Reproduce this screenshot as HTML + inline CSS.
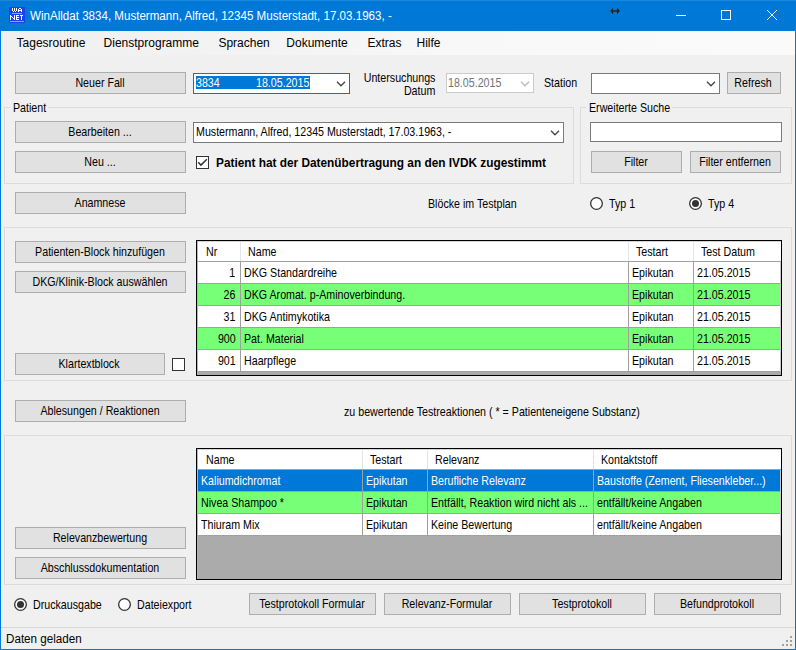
<!DOCTYPE html><html><head><meta charset="utf-8"><style>
html,body{margin:0;padding:0;}
body{width:796px;height:650px;position:relative;overflow:hidden;background:#F0F0F0;font-family:"Liberation Sans",sans-serif;}
.r{position:absolute;box-sizing:border-box;}
.t{position:absolute;white-space:nowrap;font-family:"Liberation Sans",sans-serif;}
</style></head><body>
<div class="r" style="left:0px;top:0px;width:796px;height:31px;background:#0078D7;"></div>
<div class="r" style="left:0px;top:0px;width:796px;height:1px;background:#1C86DA;"></div>
<svg class="r" style="left:9px;top:7px" width="16" height="16" viewBox="0 0 16 16" shape-rendering="crispEdges"><rect width="16" height="16" fill="#1A44E4"/><rect x="3" y="1" width="1" height="3" fill="#FFF"/><rect x="5" y="1" width="1" height="3" fill="#FFF"/><rect x="7" y="1" width="1" height="3" fill="#FFF"/><rect x="4" y="4" width="1" height="1" fill="#FFF"/><rect x="6" y="4" width="1" height="1" fill="#FFF"/><rect x="10" y="1" width="2" height="1" fill="#FFF"/><rect x="9" y="2" width="1" height="3" fill="#FFF"/><rect x="12" y="2" width="1" height="3" fill="#FFF"/><rect x="10" y="3" width="2" height="1" fill="#FFF"/><rect x="3" y="6" width="10" height="1" fill="#F59A1E"/><rect x="1" y="8" width="1" height="5" fill="#FFF"/><rect x="5" y="8" width="1" height="5" fill="#FFF"/><rect x="2" y="9" width="1" height="1" fill="#FFF"/><rect x="3" y="10" width="1" height="1" fill="#FFF"/><rect x="4" y="11" width="1" height="1" fill="#FFF"/><rect x="7" y="8" width="1" height="5" fill="#FFF"/><rect x="8" y="8" width="2" height="1" fill="#FFF"/><rect x="8" y="10" width="2" height="1" fill="#FFF"/><rect x="8" y="12" width="2" height="1" fill="#FFF"/><rect x="11" y="8" width="3" height="1" fill="#FFF"/><rect x="12" y="9" width="1" height="4" fill="#FFF"/><rect x="1" y="14" width="14" height="1" fill="#F59A1E"/></svg>
<div class="t" style="left:30.3px;top:9px;font-size:12px;line-height:14px;color:#FFF;transform:scaleX(0.965);transform-origin:0 0;">WinAlldat 3834, Mustermann, Alfred, 12345 Musterstadt, 17.03.1963, -</div>
<svg class="r" style="left:610px;top:7px" width="11" height="8" viewBox="0 0 11 8"><path d="M0 4 L3 0.8 L3.2 3.2 L6.8 3.2 L7 0.8 L10 4 L7 7.2 L6.8 4.8 L3.2 4.8 L3 7.2 Z" fill="#2B2420"/></svg>
<div class="r" style="left:676px;top:15px;width:10px;height:1px;background:#FFF;"></div>
<div class="r" style="left:721px;top:10px;width:10px;height:10px;border:1px solid #FFF;"></div>
<svg class="r" style="left:767px;top:10px" width="10" height="10" viewBox="0 0 10 10"><path d="M0 0 L10 10 M10 0 L0 10" fill="none" stroke="#FFF" stroke-width="1"/></svg>
<div class="r" style="left:0px;top:31px;width:1px;height:619px;background:#0078D7;"></div>
<div class="r" style="left:795px;top:31px;width:1px;height:619px;background:#0078D7;"></div>
<div class="r" style="left:0px;top:649px;width:796px;height:1px;background:#0078D7;"></div>
<div class="r" style="left:1px;top:31px;width:794px;height:24px;background:linear-gradient(90deg,#F0F0F0 0px,#F3F3F3 250px,#F8F8F8 450px,#FAFAFA 796px);"></div>
<div class="t" style="left:16.6px;top:36px;font-size:12px;line-height:14px;color:#000;transform:scaleX(1);transform-origin:0 0;">Tagesroutine</div>
<div class="t" style="left:103.6px;top:36px;font-size:12px;line-height:14px;color:#000;transform:scaleX(1);transform-origin:0 0;">Dienstprogramme</div>
<div class="t" style="left:218.4px;top:36px;font-size:12px;line-height:14px;color:#000;transform:scaleX(1);transform-origin:0 0;">Sprachen</div>
<div class="t" style="left:286.3px;top:36px;font-size:12px;line-height:14px;color:#000;transform:scaleX(1);transform-origin:0 0;">Dokumente</div>
<div class="t" style="left:367.4px;top:36px;font-size:12px;line-height:14px;color:#000;transform:scaleX(1);transform-origin:0 0;">Extras</div>
<div class="t" style="left:416.5px;top:36px;font-size:12px;line-height:14px;color:#000;transform:scaleX(1);transform-origin:0 0;">Hilfe</div>
<div class="r" style="left:15px;top:72px;width:171px;height:22px;background:#E1E1E1;border:1px solid #ADADAD;"></div>
<div class="t" style="left:-200.5px;width:600px;text-align:center;top:75px;font-size:13px;line-height:15px;color:#000;transform:scaleX(0.82);transform-origin:50% 0;">Neuer Fall</div>
<div class="r" style="left:193px;top:73px;width:157px;height:21px;background:#FFF;border:1px solid #0078D7;"></div>
<div class="r" style="left:196px;top:76px;width:114px;height:13px;background:#0078D7;"></div>
<div class="t" style="left:196px;top:75px;font-size:13px;line-height:15px;color:#FFF;transform:scaleX(0.82);transform-origin:0 0;">3834</div>
<div class="t" style="left:256px;top:75px;font-size:13px;line-height:15px;color:#FFF;transform:scaleX(0.82);transform-origin:0 0;">18.05.2015</div>
<svg class="r" style="left:336px;top:81px" width="10" height="6" viewBox="0 0 10 6"><path d="M1 0.8 L5 4.8 L9 0.8" fill="none" stroke="#444" stroke-width="1.3"/></svg>
<div class="t" style="right:360.5px;top:70px;font-size:13px;line-height:15px;color:#000;transform:scaleX(0.82);transform-origin:100% 0;">Untersuchungs</div>
<div class="t" style="right:360.5px;top:83px;font-size:13px;line-height:15px;color:#000;transform:scaleX(0.82);transform-origin:100% 0;">Datum</div>
<div class="r" style="left:446px;top:73px;width:88px;height:20px;background:#FFF;border:1px solid #CCCCCC;"></div>
<div class="t" style="left:448.1px;top:75px;font-size:13px;line-height:15px;color:#737373;transform:scaleX(0.82);transform-origin:0 0;">18.05.2015</div>
<svg class="r" style="left:520px;top:81px" width="10" height="6" viewBox="0 0 10 6"><path d="M1 0.8 L5 4.8 L9 0.8" fill="none" stroke="#BBBBBB" stroke-width="1.3"/></svg>
<div class="t" style="left:543.5px;top:75px;font-size:13px;line-height:15px;color:#000;transform:scaleX(0.82);transform-origin:0 0;">Station</div>
<div class="r" style="left:591px;top:73px;width:129px;height:21px;background:#FFF;border:1px solid #7A7A7A;"></div>
<svg class="r" style="left:706px;top:81.0px" width="10" height="6" viewBox="0 0 10 6"><path d="M1 0.8 L5 4.8 L9 0.8" fill="none" stroke="#444" stroke-width="1.3"/></svg>
<div class="r" style="left:727px;top:72px;width:54px;height:22px;background:#E1E1E1;border:1px solid #ADADAD;"></div>
<div class="t" style="left:453.0px;width:600px;text-align:center;top:75px;font-size:13px;line-height:15px;color:#000;transform:scaleX(0.82);transform-origin:50% 0;">Refresh</div>
<div class="r" style="left:4px;top:107px;width:570px;height:77px;border:1px solid #DCDCDC;"></div>
<div class="r" style="left:10px;top:106px;width:38px;height:3px;background:#F0F0F0;"></div>
<div class="t" style="left:13px;top:100px;font-size:13px;line-height:15px;color:#000;transform:scaleX(0.82);transform-origin:0 0;">Patient</div>
<div class="r" style="left:15px;top:121px;width:171px;height:22px;background:#E1E1E1;border:1px solid #ADADAD;"></div>
<div class="t" style="left:-200.5px;width:600px;text-align:center;top:124px;font-size:13px;line-height:15px;color:#000;transform:scaleX(0.82);transform-origin:50% 0;">Bearbeiten ...</div>
<div class="r" style="left:193px;top:122px;width:371px;height:21px;background:#FFF;border:1px solid #7A7A7A;"></div>
<svg class="r" style="left:550px;top:130.0px" width="10" height="6" viewBox="0 0 10 6"><path d="M1 0.8 L5 4.8 L9 0.8" fill="none" stroke="#444" stroke-width="1.3"/></svg>
<div class="t" style="left:196px;top:124px;font-size:13px;line-height:15px;color:#000;transform:scaleX(0.82);transform-origin:0 0;">Mustermann, Alfred, 12345 Musterstadt, 17.03.1963, -</div>
<div class="r" style="left:15px;top:151px;width:171px;height:22px;background:#E1E1E1;border:1px solid #ADADAD;"></div>
<div class="t" style="left:-200.5px;width:600px;text-align:center;top:154px;font-size:13px;line-height:15px;color:#000;transform:scaleX(0.82);transform-origin:50% 0;">Neu ...</div>
<div class="r" style="left:196px;top:156px;width:13px;height:13px;background:#FFF;border:1px solid #333;"></div>
<svg class="r" style="left:196px;top:156px" width="13" height="13" viewBox="0 0 13 13"><path d="M2.2 6.3 L4.9 9.1 L10.9 3.2" fill="none" stroke="#333" stroke-width="1.5"/></svg>
<div class="t" style="left:216px;top:156px;font-size:12px;line-height:14px;color:#000;font-weight:bold;transform:scaleX(0.986);transform-origin:0 0;">Patient hat der Datenübertragung an den IVDK zugestimmt</div>
<div class="r" style="left:580px;top:107px;width:212px;height:77px;border:1px solid #DCDCDC;"></div>
<div class="r" style="left:586px;top:106px;width:86px;height:3px;background:#F0F0F0;"></div>
<div class="t" style="left:589px;top:100px;font-size:13px;line-height:15px;color:#000;transform:scaleX(0.82);transform-origin:0 0;">Erweiterte Suche</div>
<div class="r" style="left:590px;top:122px;width:192px;height:20px;background:#FFF;border:1px solid #7A7A7A;"></div>
<div class="r" style="left:591px;top:151px;width:91px;height:22px;background:#E1E1E1;border:1px solid #ADADAD;"></div>
<div class="t" style="left:335.5px;width:600px;text-align:center;top:154px;font-size:13px;line-height:15px;color:#000;transform:scaleX(0.82);transform-origin:50% 0;">Filter</div>
<div class="r" style="left:690px;top:151px;width:91px;height:22px;background:#E1E1E1;border:1px solid #ADADAD;"></div>
<div class="t" style="left:434.5px;width:600px;text-align:center;top:154px;font-size:13px;line-height:15px;color:#000;transform:scaleX(0.82);transform-origin:50% 0;">Filter entfernen</div>
<div class="r" style="left:15px;top:192px;width:171px;height:22px;background:#E1E1E1;border:1px solid #ADADAD;"></div>
<div class="t" style="left:-200.5px;width:600px;text-align:center;top:195px;font-size:13px;line-height:15px;color:#000;transform:scaleX(0.82);transform-origin:50% 0;">Anamnese</div>
<div class="t" style="left:427.7px;top:196px;font-size:13px;line-height:15px;color:#000;transform:scaleX(0.82);transform-origin:0 0;">Blöcke im Testplan</div>
<svg class="r" style="left:590px;top:197px" width="13" height="13" viewBox="0 0 13 13"><circle cx="6.5" cy="6.5" r="5.85" fill="#FFF" stroke="#333" stroke-width="1.3"/></svg>
<div class="t" style="left:609px;top:196px;font-size:13px;line-height:15px;color:#000;transform:scaleX(0.82);transform-origin:0 0;">Typ 1</div>
<svg class="r" style="left:689px;top:197px" width="13" height="13" viewBox="0 0 13 13"><circle cx="6.5" cy="6.5" r="5.85" fill="#FFF" stroke="#333" stroke-width="1.3"/><circle cx="6.5" cy="6.5" r="3.5" fill="#333"/></svg>
<div class="t" style="left:707.6px;top:196px;font-size:13px;line-height:15px;color:#000;transform:scaleX(0.82);transform-origin:0 0;">Typ 4</div>
<div class="r" style="left:4px;top:227px;width:788px;height:154px;border:1px solid #DCDCDC;"></div>
<div class="r" style="left:15px;top:241px;width:171px;height:22px;background:#E1E1E1;border:1px solid #ADADAD;"></div>
<div class="t" style="left:-200.5px;width:600px;text-align:center;top:244px;font-size:13px;line-height:15px;color:#000;transform:scaleX(0.82);transform-origin:50% 0;">Patienten-Block hinzufügen</div>
<div class="r" style="left:15px;top:271px;width:171px;height:22px;background:#E1E1E1;border:1px solid #ADADAD;"></div>
<div class="t" style="left:-200.5px;width:600px;text-align:center;top:274px;font-size:13px;line-height:15px;color:#000;transform:scaleX(0.82);transform-origin:50% 0;">DKG/Klinik-Block auswählen</div>
<div class="r" style="left:15px;top:353px;width:150px;height:22px;background:#E1E1E1;border:1px solid #ADADAD;"></div>
<div class="t" style="left:-211.0px;width:600px;text-align:center;top:356px;font-size:13px;line-height:15px;color:#000;transform:scaleX(0.82);transform-origin:50% 0;">Klartextblock</div>
<div class="r" style="left:172px;top:358px;width:13px;height:13px;background:#FFF;border:1px solid #333;"></div>
<div class="r" style="left:196px;top:240px;width:586px;height:136px;background:#ABABAB;border:1px solid #000;"></div>
<div class="r" style="left:197px;top:241px;width:584px;height:20px;background:#FFF;"></div>
<div class="r" style="left:197px;top:261px;width:584px;height:1px;background:#A0A0A0;"></div>
<div class="r" style="left:240px;top:241px;width:1px;height:20px;background:#E5E5E5;"></div>
<div class="r" style="left:628px;top:241px;width:1px;height:20px;background:#E5E5E5;"></div>
<div class="r" style="left:693px;top:241px;width:1px;height:20px;background:#E5E5E5;"></div>
<div class="t" style="left:206.3px;top:244px;font-size:13px;line-height:15px;color:#000;transform:scaleX(0.82);transform-origin:0 0;">Nr</div>
<div class="t" style="left:248px;top:244px;font-size:13px;line-height:15px;color:#000;transform:scaleX(0.82);transform-origin:0 0;">Name</div>
<div class="t" style="left:636px;top:244px;font-size:13px;line-height:15px;color:#000;transform:scaleX(0.82);transform-origin:0 0;">Testart</div>
<div class="t" style="left:701px;top:244px;font-size:13px;line-height:15px;color:#000;transform:scaleX(0.82);transform-origin:0 0;">Test Datum</div>
<div class="r" style="left:197px;top:262px;width:584px;height:21px;background:#FFF;"></div>
<div class="r" style="left:197px;top:283px;width:584px;height:1px;background:#A0A0A0;"></div>
<div class="r" style="left:240px;top:262px;width:1px;height:21px;background:#A0A0A0;"></div>
<div class="r" style="left:628px;top:262px;width:1px;height:21px;background:#A0A0A0;"></div>
<div class="r" style="left:693px;top:262px;width:1px;height:21px;background:#A0A0A0;"></div>
<div class="t" style="right:560.5px;top:265px;font-size:13px;line-height:15px;color:#000;transform:scaleX(0.82);transform-origin:100% 0;">1</div>
<div class="t" style="left:243.8px;top:265px;font-size:13px;line-height:15px;color:#000;transform:scaleX(0.82);transform-origin:0 0;">DKG Standardreihe</div>
<div class="t" style="left:631.8px;top:265px;font-size:13px;line-height:15px;color:#000;transform:scaleX(0.82);transform-origin:0 0;">Epikutan</div>
<div class="t" style="left:696.8px;top:265px;font-size:13px;line-height:15px;color:#000;transform:scaleX(0.82);transform-origin:0 0;">21.05.2015</div>
<div class="r" style="left:197px;top:284px;width:584px;height:21px;background:#78FF78;"></div>
<div class="r" style="left:197px;top:305px;width:584px;height:1px;background:#A0A0A0;"></div>
<div class="r" style="left:240px;top:284px;width:1px;height:21px;background:#A0A0A0;"></div>
<div class="r" style="left:628px;top:284px;width:1px;height:21px;background:#A0A0A0;"></div>
<div class="r" style="left:693px;top:284px;width:1px;height:21px;background:#A0A0A0;"></div>
<div class="t" style="right:560.5px;top:287px;font-size:13px;line-height:15px;color:#000;transform:scaleX(0.82);transform-origin:100% 0;">26</div>
<div class="t" style="left:243.8px;top:287px;font-size:13px;line-height:15px;color:#000;transform:scaleX(0.82);transform-origin:0 0;">DKG Aromat. p-Aminoverbindung.</div>
<div class="t" style="left:631.8px;top:287px;font-size:13px;line-height:15px;color:#000;transform:scaleX(0.82);transform-origin:0 0;">Epikutan</div>
<div class="t" style="left:696.8px;top:287px;font-size:13px;line-height:15px;color:#000;transform:scaleX(0.82);transform-origin:0 0;">21.05.2015</div>
<div class="r" style="left:197px;top:306px;width:584px;height:21px;background:#FFF;"></div>
<div class="r" style="left:197px;top:327px;width:584px;height:1px;background:#A0A0A0;"></div>
<div class="r" style="left:240px;top:306px;width:1px;height:21px;background:#A0A0A0;"></div>
<div class="r" style="left:628px;top:306px;width:1px;height:21px;background:#A0A0A0;"></div>
<div class="r" style="left:693px;top:306px;width:1px;height:21px;background:#A0A0A0;"></div>
<div class="t" style="right:560.5px;top:309px;font-size:13px;line-height:15px;color:#000;transform:scaleX(0.82);transform-origin:100% 0;">31</div>
<div class="t" style="left:243.8px;top:309px;font-size:13px;line-height:15px;color:#000;transform:scaleX(0.82);transform-origin:0 0;">DKG Antimykotika</div>
<div class="t" style="left:631.8px;top:309px;font-size:13px;line-height:15px;color:#000;transform:scaleX(0.82);transform-origin:0 0;">Epikutan</div>
<div class="t" style="left:696.8px;top:309px;font-size:13px;line-height:15px;color:#000;transform:scaleX(0.82);transform-origin:0 0;">21.05.2015</div>
<div class="r" style="left:197px;top:328px;width:584px;height:21px;background:#78FF78;"></div>
<div class="r" style="left:197px;top:349px;width:584px;height:1px;background:#A0A0A0;"></div>
<div class="r" style="left:240px;top:328px;width:1px;height:21px;background:#A0A0A0;"></div>
<div class="r" style="left:628px;top:328px;width:1px;height:21px;background:#A0A0A0;"></div>
<div class="r" style="left:693px;top:328px;width:1px;height:21px;background:#A0A0A0;"></div>
<div class="t" style="right:560.5px;top:331px;font-size:13px;line-height:15px;color:#000;transform:scaleX(0.82);transform-origin:100% 0;">900</div>
<div class="t" style="left:243.8px;top:331px;font-size:13px;line-height:15px;color:#000;transform:scaleX(0.82);transform-origin:0 0;">Pat. Material</div>
<div class="t" style="left:631.8px;top:331px;font-size:13px;line-height:15px;color:#000;transform:scaleX(0.82);transform-origin:0 0;">Epikutan</div>
<div class="t" style="left:696.8px;top:331px;font-size:13px;line-height:15px;color:#000;transform:scaleX(0.82);transform-origin:0 0;">21.05.2015</div>
<div class="r" style="left:197px;top:350px;width:584px;height:21px;background:#FFF;"></div>
<div class="r" style="left:197px;top:371px;width:584px;height:1px;background:#A0A0A0;"></div>
<div class="r" style="left:240px;top:350px;width:1px;height:21px;background:#A0A0A0;"></div>
<div class="r" style="left:628px;top:350px;width:1px;height:21px;background:#A0A0A0;"></div>
<div class="r" style="left:693px;top:350px;width:1px;height:21px;background:#A0A0A0;"></div>
<div class="t" style="right:560.5px;top:353px;font-size:13px;line-height:15px;color:#000;transform:scaleX(0.82);transform-origin:100% 0;">901</div>
<div class="t" style="left:243.8px;top:353px;font-size:13px;line-height:15px;color:#000;transform:scaleX(0.82);transform-origin:0 0;">Haarpflege</div>
<div class="t" style="left:631.8px;top:353px;font-size:13px;line-height:15px;color:#000;transform:scaleX(0.82);transform-origin:0 0;">Epikutan</div>
<div class="t" style="left:696.8px;top:353px;font-size:13px;line-height:15px;color:#000;transform:scaleX(0.82);transform-origin:0 0;">21.05.2015</div>
<div class="r" style="left:197px;top:372px;width:584px;height:3px;background:#ABABAB;"></div>
<div class="r" style="left:197px;top:241px;width:1px;height:134px;background:#B4B4B4;"></div>
<div class="r" style="left:198px;top:241px;width:583px;height:1px;background:#D4D4D4;"></div>
<div class="r" style="left:780px;top:262px;width:1px;height:110px;background:#C8C8C8;"></div>
<div class="r" style="left:15px;top:400px;width:171px;height:22px;background:#E1E1E1;border:1px solid #ADADAD;"></div>
<div class="t" style="left:-200.5px;width:600px;text-align:center;top:403px;font-size:13px;line-height:15px;color:#000;transform:scaleX(0.82);transform-origin:50% 0;">Ablesungen / Reaktionen</div>
<div class="t" style="left:344px;top:404px;font-size:13px;line-height:15px;color:#000;transform:scaleX(0.82);transform-origin:0 0;">zu bewertende Testreaktionen ( * = Patienteneigene Substanz)</div>
<div class="r" style="left:4px;top:435px;width:788px;height:150px;border:1px solid #DCDCDC;"></div>
<div class="r" style="left:196px;top:448px;width:586px;height:132px;background:#ABABAB;border:1px solid #000;"></div>
<div class="r" style="left:197px;top:449px;width:584px;height:20px;background:#FFF;"></div>
<div class="r" style="left:197px;top:469px;width:584px;height:1px;background:#A0A0A0;"></div>
<div class="r" style="left:362px;top:449px;width:1px;height:20px;background:#E5E5E5;"></div>
<div class="r" style="left:427px;top:449px;width:1px;height:20px;background:#E5E5E5;"></div>
<div class="r" style="left:593px;top:449px;width:1px;height:20px;background:#E5E5E5;"></div>
<div class="t" style="left:206.3px;top:452px;font-size:13px;line-height:15px;color:#000;transform:scaleX(0.82);transform-origin:0 0;">Name</div>
<div class="t" style="left:370px;top:452px;font-size:13px;line-height:15px;color:#000;transform:scaleX(0.82);transform-origin:0 0;">Testart</div>
<div class="t" style="left:435px;top:452px;font-size:13px;line-height:15px;color:#000;transform:scaleX(0.82);transform-origin:0 0;">Relevanz</div>
<div class="t" style="left:601px;top:452px;font-size:13px;line-height:15px;color:#000;transform:scaleX(0.82);transform-origin:0 0;">Kontaktstoff</div>
<div class="r" style="left:197px;top:470px;width:584px;height:21px;background:#0078D7;"></div>
<div class="r" style="left:197px;top:491px;width:584px;height:1px;background:#A0A0A0;"></div>
<div class="r" style="left:362px;top:470px;width:1px;height:21px;background:#A0A0A0;"></div>
<div class="r" style="left:427px;top:470px;width:1px;height:21px;background:#A0A0A0;"></div>
<div class="r" style="left:593px;top:470px;width:1px;height:21px;background:#A0A0A0;"></div>
<div class="t" style="left:200.5px;top:473px;font-size:13px;line-height:15px;color:#FFF;transform:scaleX(0.82);transform-origin:0 0;">Kaliumdichromat</div>
<div class="t" style="left:365.8px;top:473px;font-size:13px;line-height:15px;color:#FFF;transform:scaleX(0.82);transform-origin:0 0;">Epikutan</div>
<div class="t" style="left:430.8px;top:473px;font-size:13px;line-height:15px;color:#FFF;transform:scaleX(0.82);transform-origin:0 0;">Berufliche Relevanz</div>
<div class="t" style="left:596.8px;top:473px;font-size:13px;line-height:15px;color:#FFF;transform:scaleX(0.82);transform-origin:0 0;">Baustoffe (Zement, Fliesenkleber...)</div>
<div class="r" style="left:197px;top:492px;width:584px;height:21px;background:#78FF78;"></div>
<div class="r" style="left:197px;top:513px;width:584px;height:1px;background:#A0A0A0;"></div>
<div class="r" style="left:362px;top:492px;width:1px;height:21px;background:#A0A0A0;"></div>
<div class="r" style="left:427px;top:492px;width:1px;height:21px;background:#A0A0A0;"></div>
<div class="r" style="left:593px;top:492px;width:1px;height:21px;background:#A0A0A0;"></div>
<div class="t" style="left:200.5px;top:495px;font-size:13px;line-height:15px;color:#000;transform:scaleX(0.82);transform-origin:0 0;">Nivea Shampoo *</div>
<div class="t" style="left:365.8px;top:495px;font-size:13px;line-height:15px;color:#000;transform:scaleX(0.82);transform-origin:0 0;">Epikutan</div>
<div class="t" style="left:430.8px;top:495px;font-size:13px;line-height:15px;color:#000;transform:scaleX(0.82);transform-origin:0 0;">Entfällt, Reaktion wird nicht als ...</div>
<div class="t" style="left:596.8px;top:495px;font-size:13px;line-height:15px;color:#000;transform:scaleX(0.82);transform-origin:0 0;">entfällt/keine Angaben</div>
<div class="r" style="left:197px;top:514px;width:584px;height:21px;background:#FFF;"></div>
<div class="r" style="left:197px;top:535px;width:584px;height:1px;background:#A0A0A0;"></div>
<div class="r" style="left:362px;top:514px;width:1px;height:21px;background:#A0A0A0;"></div>
<div class="r" style="left:427px;top:514px;width:1px;height:21px;background:#A0A0A0;"></div>
<div class="r" style="left:593px;top:514px;width:1px;height:21px;background:#A0A0A0;"></div>
<div class="t" style="left:200.5px;top:517px;font-size:13px;line-height:15px;color:#000;transform:scaleX(0.82);transform-origin:0 0;">Thiuram Mix</div>
<div class="t" style="left:365.8px;top:517px;font-size:13px;line-height:15px;color:#000;transform:scaleX(0.82);transform-origin:0 0;">Epikutan</div>
<div class="t" style="left:430.8px;top:517px;font-size:13px;line-height:15px;color:#000;transform:scaleX(0.82);transform-origin:0 0;">Keine Bewertung</div>
<div class="t" style="left:596.8px;top:517px;font-size:13px;line-height:15px;color:#000;transform:scaleX(0.82);transform-origin:0 0;">entfällt/keine Angaben</div>
<div class="r" style="left:197px;top:536px;width:584px;height:43px;background:#ABABAB;"></div>
<div class="r" style="left:197px;top:449px;width:1px;height:130px;background:#B4B4B4;"></div>
<div class="r" style="left:198px;top:449px;width:583px;height:1px;background:#D4D4D4;"></div>
<div class="r" style="left:780px;top:470px;width:1px;height:66px;background:#C8C8C8;"></div>
<div class="r" style="left:15px;top:527px;width:171px;height:22px;background:#E1E1E1;border:1px solid #ADADAD;"></div>
<div class="t" style="left:-200.5px;width:600px;text-align:center;top:530px;font-size:13px;line-height:15px;color:#000;transform:scaleX(0.82);transform-origin:50% 0;">Relevanzbewertung</div>
<div class="r" style="left:15px;top:557px;width:171px;height:22px;background:#E1E1E1;border:1px solid #ADADAD;"></div>
<div class="t" style="left:-200.5px;width:600px;text-align:center;top:560px;font-size:13px;line-height:15px;color:#000;transform:scaleX(0.82);transform-origin:50% 0;">Abschlussdokumentation</div>
<svg class="r" style="left:14px;top:598px" width="13" height="13" viewBox="0 0 13 13"><circle cx="6.5" cy="6.5" r="5.85" fill="#FFF" stroke="#333" stroke-width="1.3"/><circle cx="6.5" cy="6.5" r="3.5" fill="#333"/></svg>
<div class="t" style="left:33px;top:597px;font-size:13px;line-height:15px;color:#000;transform:scaleX(0.82);transform-origin:0 0;">Druckausgabe</div>
<svg class="r" style="left:118px;top:598px" width="13" height="13" viewBox="0 0 13 13"><circle cx="6.5" cy="6.5" r="5.85" fill="#FFF" stroke="#333" stroke-width="1.3"/></svg>
<div class="t" style="left:137px;top:597px;font-size:13px;line-height:15px;color:#000;transform:scaleX(0.82);transform-origin:0 0;">Dateiexport</div>
<div class="r" style="left:249px;top:593px;width:127px;height:22px;background:#E1E1E1;border:1px solid #ADADAD;"></div>
<div class="t" style="left:11.5px;width:600px;text-align:center;top:596px;font-size:13px;line-height:15px;color:#000;transform:scaleX(0.82);transform-origin:50% 0;">Testprotokoll Formular</div>
<div class="r" style="left:384px;top:593px;width:127px;height:22px;background:#E1E1E1;border:1px solid #ADADAD;"></div>
<div class="t" style="left:146.5px;width:600px;text-align:center;top:596px;font-size:13px;line-height:15px;color:#000;transform:scaleX(0.82);transform-origin:50% 0;">Relevanz-Formular</div>
<div class="r" style="left:519px;top:593px;width:127px;height:22px;background:#E1E1E1;border:1px solid #ADADAD;"></div>
<div class="t" style="left:281.5px;width:600px;text-align:center;top:596px;font-size:13px;line-height:15px;color:#000;transform:scaleX(0.82);transform-origin:50% 0;">Testprotokoll</div>
<div class="r" style="left:654px;top:593px;width:127px;height:22px;background:#E1E1E1;border:1px solid #ADADAD;"></div>
<div class="t" style="left:416.5px;width:600px;text-align:center;top:596px;font-size:13px;line-height:15px;color:#000;transform:scaleX(0.82);transform-origin:50% 0;">Befundprotokoll</div>
<div class="r" style="left:1px;top:627px;width:794px;height:1px;background:#D7D7D7;"></div>
<div class="t" style="left:5.6px;top:632px;font-size:12px;line-height:14px;color:#000;transform:scaleX(0.97);transform-origin:0 0;">Daten geladen</div>
<div class="r" style="left:790px;top:636px;width:2px;height:2px;background:#A0A0A0;"></div>
<div class="r" style="left:786px;top:640px;width:2px;height:2px;background:#A0A0A0;"></div>
<div class="r" style="left:790px;top:640px;width:2px;height:2px;background:#A0A0A0;"></div>
<div class="r" style="left:782px;top:644px;width:2px;height:2px;background:#A0A0A0;"></div>
<div class="r" style="left:786px;top:644px;width:2px;height:2px;background:#A0A0A0;"></div>
<div class="r" style="left:790px;top:644px;width:2px;height:2px;background:#A0A0A0;"></div>
</body></html>
